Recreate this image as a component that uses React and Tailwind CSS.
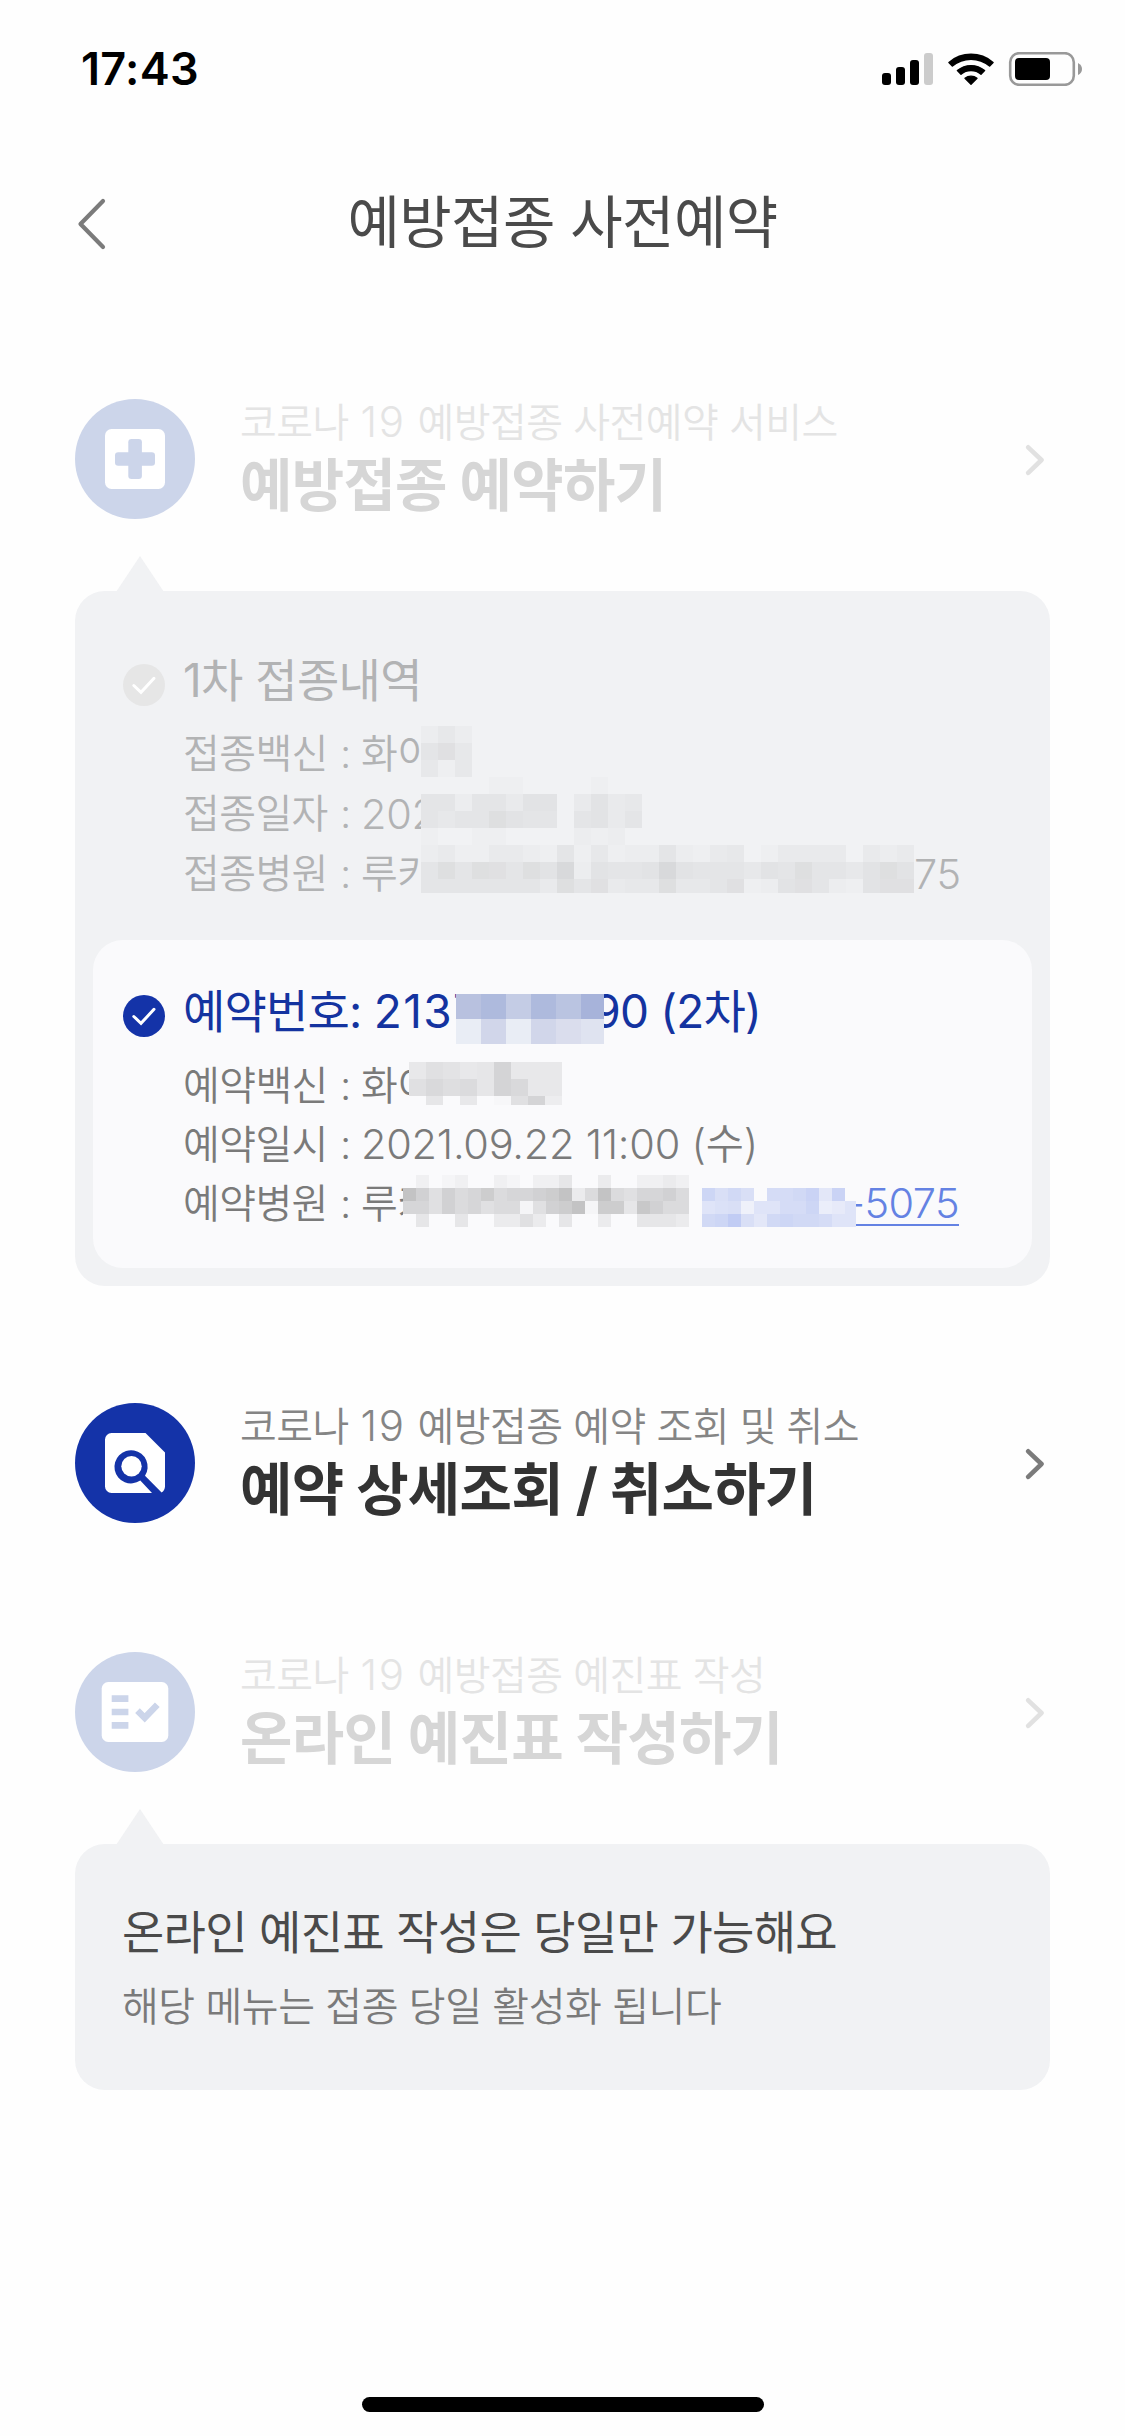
const toneClasses = {
  muted: {
    circle: 'text-[#ccd5ea]',
    caption: 'text-[#e4e4e4]',
    title: 'text-[#d6d6d6]',
    arrow: 'text-[#e1e1e1]',
  },
  active: {
    circle: 'text-[#1433a8]',
    caption: 'text-[#858585]',
    title: 'text-[#333333]',
    arrow: 'text-[#7b7b7b]',
  },
}

function StatusBar() {
  return (
    <div className="flex h-[132px] items-start justify-between pl-[81px] pr-[42px] pt-[44px]">
      <span className="text-[45px] font-semibold leading-[50px] tracking-[0.3px] text-black">17:43</span>
      <svg className="mt-[8px] h-[34px] w-[201px]" viewBox="0 0 201 34">
        <rect x="0" y="21" width="9" height="12" rx="3" />
        <rect x="14" y="15" width="9" height="18" rx="3" />
        <rect x="28" y="8" width="9" height="25" rx="3" />
        <rect x="42" y="1" width="9" height="32" rx="3" fill="#cccccc" />
        <path d="M67 10.5A34 34 0 0 1 111 10.5L107.6 14A28.5 28.5 0 0 0 70.4 14Z" stroke="#000" strokeWidth="1.6" strokeLinejoin="round" />
        <path d="M75.4 18.6A21 21 0 0 1 102.6 18.6L99 22.2A15.5 15.5 0 0 0 79 22.2Z" stroke="#000" strokeWidth="1.4" strokeLinejoin="round" />
        <path d="M83 26.3A9.5 9.5 0 0 1 95 26.3L89 32.3Z" stroke="#000" strokeWidth="1.4" strokeLinejoin="round" />
        <rect x="128.2" y="1.2" width="63.6" height="31.6" rx="9" fill="none" stroke="#999999" strokeWidth="2.6" />
        <rect x="133" y="6" width="35" height="22" rx="4" />
        <path d="M196 11Q200 13 200 17T196 23Z" fill="#999999" />
      </svg>
    </div>
  )
}

function PlusIcon() {
  return (
    <>
      <rect x="30" y="30" width="60" height="60" rx="6.5" fill="#fff" />
      <rect x="53.3" y="40" width="13.6" height="40" rx="3.2" fill="currentColor" />
      <rect x="40" y="53.2" width="40" height="13.6" rx="3.2" fill="currentColor" />
    </>
  )
}

function SearchDocIcon() {
  return (
    <>
      <path d="M36.5 30H70.5L90 49.5V83.5C90 86 88.6 88.6 86.6 89.4L70 72.8A16.6 16.6 0 1 0 65.3 77.6L77 90H36.5A6.5 6.5 0 0 1 30 83.5V36.5A6.5 6.5 0 0 1 36.5 30Z" fill="#fff" />
      <circle cx="56.5" cy="63.3" r="10.2" fill="#fff" />
    </>
  )
}

function CheckListIcon() {
  return (
    <>
      <rect x="26.7" y="30" width="66.6" height="60" rx="6.5" fill="#fff" />
      <path d="M36.7 43.2H53.4V50H36.7ZM36.7 56.8H53.4V63.2H36.7ZM36.7 70H53.4V76.8H36.7Z" fill="currentColor" />
      <path d="M62.5 58.7L69.7 65.8L82.3 52.8" fill="none" stroke="currentColor" strokeWidth="6.6" />
    </>
  )
}

function MenuRow({ tone, icon, caption, title }) {
  const styles = toneClasses[tone]

  return (
    <div className="flex h-[120px] items-start">
      <svg className={`h-[120px] w-[120px] ${styles.circle}`} viewBox="0 0 120 120">
        <circle cx="60" cy="60" r="60" fill="currentColor" />
        {icon}
      </svg>
      <div className="ml-[45px] flex-1 whitespace-nowrap">
        <p className={`text-[40px] font-[350] leading-[48px] tracking-[-0.55px] ${styles.caption}`}>
          코로나 <span className="ml-px mr-px text-[42px] leading-none tracking-[1.8px]">19</span> {caption}
        </p>
        <h2 className={`mt-[6px] text-[57px] font-bold leading-[66px] tracking-[-0.75px] ${styles.title}`}>{title}</h2>
      </div>
      <svg className={`mr-[5px] mt-[45px] h-[32px] w-[20px] ${styles.arrow}`} viewBox="0 0 20 32">
        <path d="M3.2 3.3L16.5 16L3.2 28.8" fill="none" stroke="currentColor" strokeWidth="4.6" strokeLinecap="round" strokeLinejoin="round" />
      </svg>
    </div>
  )
}

function Bubble({ children, className = '' }) {
  return (
    <div className={`relative rounded-[30px] bg-[#f1f2f4] ${className}`}>
      <svg className="absolute -top-[35px] left-[41px] h-[36px] w-[48px]" viewBox="0 0 48 36">
        <path d="M24 0L48 36H0Z" fill="#f1f2f4" />
      </svg>
      {children}
    </div>
  )
}

function CheckBadge({ color, className = '' }) {
  return (
    <svg className={`h-[42px] w-[42px] ${className}`} viewBox="0 0 42 42">
      <circle cx="21" cy="21" r="21" fill={color} />
      <path d="M10.8 21.5L18 28.3L31 14.3" fill="none" stroke="#fff" strokeWidth="3" strokeLinecap="round" />
    </svg>
  )
}

// Each hex digit is the strength of one block, "." leaves it plain.
function Mosaic({ x, y, size, rows, base, step = 0.01, color = '#000', maxWidth = 9999, maxHeight = 9999 }) {
  return rows.flatMap((row, r) => {
    const height = Math.min(size, maxHeight - r * size)
    const width = Math.min(row.length * size, maxWidth)

    return [
      <rect key={`base-${r}`} x={x} y={y + r * size} width={width} height={height} fill={base} />,
      ...row.split('').map((level, c) =>
        level === '.' ? null : (
          <rect
            key={`${r}-${c}`}
            x={x + c * size}
            y={y + r * size}
            width={Math.min(size, maxWidth - c * size)}
            height={height}
            fill={color}
            opacity={parseInt(level, 16) * step}
          />
        ),
      ),
    ]
  })
}

function DetailRow({ label, children }) {
  return (
    <div className="flex whitespace-nowrap">
      <dt className="w-[157px]">{label}</dt>
      <span className="w-[21px]">:</span>
      <dd className="flex">{children}</dd>
    </div>
  )
}

const numberBlocks = [
  ['#b8c1df', '#aebadd', '#c4cce5', '#aebadd', '#bac4e1', '#a7b3da'],
  ['#e9edf5', '#d1d6ea', '#e9edf5', '#d1d6ea', '#dadded', '#dfe3f0'],
]

function FirstDose() {
  return (
    <section className="relative flex h-[349px] pl-[30px] pt-[59px]">
      <CheckBadge color="#e6e6e6" className="mt-[14px]" />
      <div className="ml-[18px] text-[#b2b3b4]">
        <h3 className="text-[46px] leading-[60px] tracking-[-0.6px]">1차 접종내역</h3>
        <dl className="mt-[14px] text-[40px] font-[350] leading-[60px] tracking-[-0.6px]">
          <DetailRow label="접종백신">
            <span className="w-[60px]">화이</span>
          </DetailRow>
          <DetailRow label="접종일자">
            <span className="w-[60px] text-[41.5px] tracking-[-0.3px]">202</span>
          </DetailRow>
          <DetailRow label="접종병원">
            <span className="w-[60px]">루카</span>
            <span className="ml-[493px] text-[41.5px] tracking-[-0.3px]">75</span>
          </DetailRow>
        </dl>
      </div>
      <svg className="absolute left-[328px] top-[135px] h-[167px] w-[493px]" viewBox="0 0 493 167">
        <Mosaic
          x={0}
          y={0}
          size={17}
          base="#f1f2f4"
          maxHeight={167}
          rows={[
            '242',
            '574',
            '414',
            '....11....1',
            '55255366.3634',
            '54558655.5635',
            '1..11....212.',
            '23113321514122521340133330323',
            '58587586a26556a65554658554686',
            '55555553857344844571267521677',
          ]}
        />
      </svg>
    </section>
  )
}

function SecondDose() {
  return (
    <section className="relative flex h-[328px] rounded-[30px] bg-[#fafafc] pl-[30px] pt-[41px]">
      <CheckBadge color="#1433a8" className="mt-[14px]" />
      <div className="ml-[18px] text-[#7a7a7a]">
        <h3 className="flex whitespace-nowrap text-[46px] leading-[60px] tracking-[-0.8px] text-[#1433a0]">
          <span className="w-[273px]">
            예약번호: <span className="tracking-[1.4px]">2137</span>
          </span>
          <span className="ml-[148px] flex w-[157px] justify-end">90 (2차)</span>
        </h3>
        <dl className="mt-[15px] text-[40px] font-[350] leading-[59px] tracking-[-0.6px]">
          <DetailRow label="예약백신">
            <span className="w-[48px]">화이</span>
          </DetailRow>
          <DetailRow label="예약일시">
            <span className="text-[41.5px] tracking-[-0.25px]">2021.09.22 11:00 (수)</span>
          </DetailRow>
          <DetailRow label="예약병원">
            <span className="w-[42px]">루카</span>
            <span className="ml-[453px] flex h-[52px] w-[103px] justify-end border-b-2 border-[#6482e3] text-[41.5px] text-[#6482e3]">
              -5075
            </span>
          </DetailRow>
        </dl>
      </div>
      <svg className="absolute left-0 top-0 h-[328px] w-[939px]" viewBox="0 0 939 328">
        {numberBlocks.map((row, r) =>
          row.map((fill, c) => (
            <rect key={`${r}-${c}`} x={363 + c * 25} y={54 + r * 25} width={c === 5 ? 23 : 25} height="25" fill={fill} />
          )),
        )}
        <Mosaic x={316} y={122} size={17} base="#fafafc" maxHeight={43} rows={['7a978f777', 'adbc8fd77', '.8.7.1af5']} />
        <Mosaic
          x={310}
          y={235}
          size={13}
          step={0.02}
          base="#fafafc"
          rows={[
            '.2.12..21.224..3..2232',
            'b85867967789b36b657786',
            '7758675661589b1994a866',
            '.4..4..3353.4..3..4443',
          ]}
        />
        <Mosaic
          x={609}
          y={248}
          size={13}
          step={0.02}
          base="#fafafc"
          color="#4064e0"
          maxWidth={154}
          rows={['c9b9.aabd6d.', '789377aac457', 'bcf96bcbba77']}
        />
      </svg>
    </section>
  )
}

export default function App() {
  return (
    <div className="flex h-[2436px] w-[1125px] flex-col overflow-hidden bg-[#fefefe] font-['Inter','Noto_Sans_CJK_KR',sans-serif]">
      <StatusBar />

      <header className="grid h-[178px] grid-cols-[1fr_auto_1fr] items-center">
        <svg className="ml-[76px] mt-[5px] h-[54px] w-[32px]" viewBox="0 0 32 54">
          <path d="M27 4L4.5 27L27 50" fill="none" stroke="#7b7b7b" strokeWidth="4.2" strokeLinecap="round" strokeLinejoin="round" />
        </svg>
        <h1 className="mt-[3px] text-[57px] leading-[80px] tracking-[-0.6px] text-[#4a4a4a]">예방접종 사전예약</h1>
      </header>

      <main className="flex-1 px-[75px] pt-[89px]">
        <MenuRow tone="muted" icon={<PlusIcon />} caption="예방접종 사전예약 서비스" title="예방접종 예약하기" />
        <Bubble className="mt-[72px] px-[18px] pb-[18px]">
          <FirstDose />
          <SecondDose />
        </Bubble>

        <div className="mt-[117px]">
          <MenuRow tone="active" icon={<SearchDocIcon />} caption="예방접종 예약 조회 및 취소" title="예약 상세조회 / 취소하기" />
        </div>

        <div className="mt-[129px]">
          <MenuRow tone="muted" icon={<CheckListIcon />} caption="예방접종 예진표 작성" title="온라인 예진표 작성하기" />
        </div>
        <Bubble className="mt-[72px] h-[246px] whitespace-nowrap pl-[47px] pt-[58px]">
          <h3 className="text-[46px] leading-[60px] tracking-[-0.7px] text-[#4a4a4a]">온라인 예진표 작성은 당일만 가능해요</h3>
          <p className="mt-[15px] text-[40px] font-[350] leading-[60px] tracking-[-0.45px] text-[#7a7a7a]">
            해당 메뉴는 접종 당일 활성화 됩니다
          </p>
        </Bubble>
      </main>

      <div className="mx-auto mb-[24px] h-[15px] w-[402px] rounded-full bg-black" />
    </div>
  )
}
